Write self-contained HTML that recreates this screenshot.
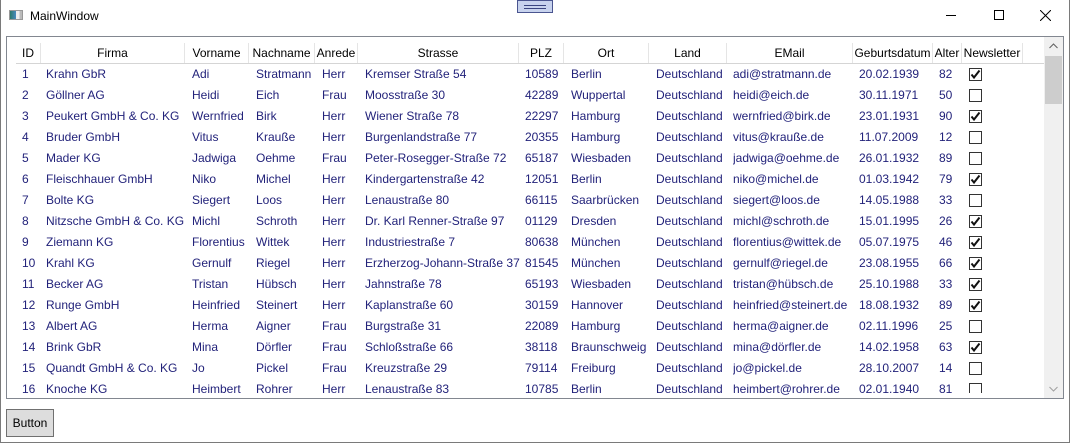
<!DOCTYPE html>
<html><head><meta charset="utf-8">
<style>
*{margin:0;padding:0;box-sizing:border-box}
body{width:1070px;height:443px;background:#fff;font-family:"Liberation Sans",sans-serif;font-size:12px;position:relative;overflow:hidden}
.win{position:absolute;left:0;top:0;width:1070px;height:443px;border:1px solid #7a7a7a;border-top:none}
.title{position:absolute;left:30px;top:9px;font-size:12px;color:#000}
.icon{position:absolute;left:9px;top:10px;width:14px;height:10px;border:1px solid #999;background:linear-gradient(90deg,#2c7a6a 0,#4a8ac0 50%,#eee 50%,#eee 80%,#bbb 80%)}
.grip{position:absolute;left:517px;top:0;width:36px;height:13px;background:#c8d3ee;border:1px solid #4a5590}
.grip:before,.grip:after{content:"";position:absolute;left:6px;right:6px;height:1px;background:#3a4580}
.grip:before{top:4px}.grip:after{top:7px}
.min{position:absolute;left:946px;top:15px;width:10px;height:1px;background:#000}
.max{position:absolute;left:994px;top:10px;width:10px;height:10px;border:1px solid #000}
.grid{position:absolute;left:6px;top:36px;width:1058px;height:363px;border:1px solid #828790}
.hdr{position:absolute;left:9px;top:6px;height:21px;width:1029px;border-bottom:1px solid #d5d5d5}
.hdr span{position:absolute;top:0;height:20px;line-height:20px;text-align:center;border-right:1px solid #e5e5e5;color:#000}
.row{position:absolute;left:0;height:21px;line-height:21px;color:#22227a;white-space:nowrap}
.row span{position:absolute;top:0;overflow:hidden}
.cb{position:absolute;top:4px;width:13px;height:13px;border:1px solid #333;background:#fff}
.sb{position:absolute;left:1037px;top:0;width:19px;height:361px;background:#f0f0f0}
.thumb{position:absolute;left:1038px;top:19px;width:17px;height:48px;background:#cdcdcd}
.btn{position:absolute;left:6px;top:409px;width:48px;height:28px;border:1px solid #707070;background:#dddddd;text-align:center;line-height:26px;color:#000}
</style></head><body>
<div class="win"></div>
<div class="icon"></div>
<div class="title">MainWindow</div>
<div class="grip"></div>
<div class="min"></div>
<div class="max"></div>
<svg style="position:absolute;left:1040px;top:10px" width="11" height="11"><path d="M0 0L11 11M11 0L0 11" stroke="#000" stroke-width="1"/></svg>
<div class="grid">
<div class="hdr">
<span style="left:0;width:25px">ID</span>
<span style="left:25px;width:144px">Firma</span>
<span style="left:169px;width:64px">Vorname</span>
<span style="left:233px;width:66px">Nachname</span>
<span style="left:299px;width:43px">Anrede</span>
<span style="left:342px;width:161px">Strasse</span>
<span style="left:503px;width:45px">PLZ</span>
<span style="left:548px;width:85px">Ort</span>
<span style="left:633px;width:78px">Land</span>
<span style="left:711px;width:126px">EMail</span>
<span style="left:837px;width:80px">Geburtsdatum</span>
<span style="left:917px;width:29px">Alter</span>
<span style="left:946px;width:61px">Newsletter</span>
</div>
<div class="sb"></div><div class="thumb"></div>
<svg style="position:absolute;left:1042px;top:6px" width="9" height="6"><path d="M0.5 5L4.5 1L8.5 5" stroke="#606060" fill="none"/></svg>
<svg style="position:absolute;left:1042px;top:349px" width="9" height="6"><path d="M0.5 1L4.5 5L8.5 1" stroke="#a0a0a0" fill="none"/></svg>
<div id="rows"></div>
</div>
<div class="btn">Button</div>
<script>
var d=[
["1","Krahn GbR","Adi","Stratmann","Herr","Kremser Straße 54","10589","Berlin","Deutschland","adi@stratmann.de","20.02.1939","82",1],
["2","Göllner AG","Heidi","Eich","Frau","Moosstraße 30","42289","Wuppertal","Deutschland","heidi@eich.de","30.11.1971","50",0],
["3","Peukert GmbH & Co. KG","Wernfried","Birk","Herr","Wiener Straße 78","22297","Hamburg","Deutschland","wernfried@birk.de","23.01.1931","90",1],
["4","Bruder GmbH","Vitus","Krauße","Herr","Burgenlandstraße 77","20355","Hamburg","Deutschland","vitus@krauße.de","11.07.2009","12",0],
["5","Mader KG","Jadwiga","Oehme","Frau","Peter-Rosegger-Straße 72","65187","Wiesbaden","Deutschland","jadwiga@oehme.de","26.01.1932","89",0],
["6","Fleischhauer GmbH","Niko","Michel","Herr","Kindergartenstraße 42","12051","Berlin","Deutschland","niko@michel.de","01.03.1942","79",1],
["7","Bolte KG","Siegert","Loos","Herr","Lenaustraße 80","66115","Saarbrücken","Deutschland","siegert@loos.de","14.05.1988","33",0],
["8","Nitzsche GmbH & Co. KG","Michl","Schroth","Herr","Dr. Karl Renner-Straße 97","01129","Dresden","Deutschland","michl@schroth.de","15.01.1995","26",1],
["9","Ziemann KG","Florentius","Wittek","Herr","Industriestraße 7","80638","München","Deutschland","florentius@wittek.de","05.07.1975","46",1],
["10","Krahl KG","Gernulf","Riegel","Herr","Erzherzog-Johann-Straße 37","81545","München","Deutschland","gernulf@riegel.de","23.08.1955","66",1],
["11","Becker AG","Tristan","Hübsch","Herr","Jahnstraße 78","65193","Wiesbaden","Deutschland","tristan@hübsch.de","25.10.1988","33",1],
["12","Runge GmbH","Heinfried","Steinert","Herr","Kaplanstraße 60","30159","Hannover","Deutschland","heinfried@steinert.de","18.08.1932","89",1],
["13","Albert AG","Herma","Aigner","Frau","Burgstraße 31","22089","Hamburg","Deutschland","herma@aigner.de","02.11.1996","25",0],
["14","Brink GbR","Mina","Dörfler","Frau","Schloßstraße 66","38118","Braunschweig","Deutschland","mina@dörfler.de","14.02.1958","63",1],
["15","Quandt GmbH & Co. KG","Jo","Pickel","Frau","Kreuzstraße 29","79114","Freiburg","Deutschland","jo@pickel.de","28.10.2007","14",0],
["16","Knoche KG","Heimbert","Rohrer","Herr","Lenaustraße 83","10785","Berlin","Deutschland","heimbert@rohrer.de","02.01.1940","81",0]];
var L=[15,39,185,249,315,358,518,564,649,726,852,932],W=[24,144,62,64,42,158,44,84,76,124,78,28];
var h="";
d.forEach(function(r,i){
 var top=27+i*21;
 h+='<div class="row" style="top:'+top+'px">';
 for(var j=0;j<12;j++)h+='<span style="left:'+L[j]+'px;width:'+W[j]+'px">'+r[j].replace(/&/g,"&amp;")+'</span>';
 h+='</div>';
 if(i<15)h+='<div class="cb" style="left:962px;top:'+(top+4)+'px">'+(r[12]?'<svg width="11" height="11" style="position:absolute;left:0;top:0"><path d="M1.5 5.5L4 8.5L9.5 1.5" stroke="#111" stroke-width="2" fill="none"/></svg>':'')+'</div>';
 else h+='<div class="cb" style="left:962px;top:'+(top+4)+'px;height:10px;border-bottom:none"></div>';
});
document.getElementById("rows").innerHTML=h;
</script>
</body></html>
